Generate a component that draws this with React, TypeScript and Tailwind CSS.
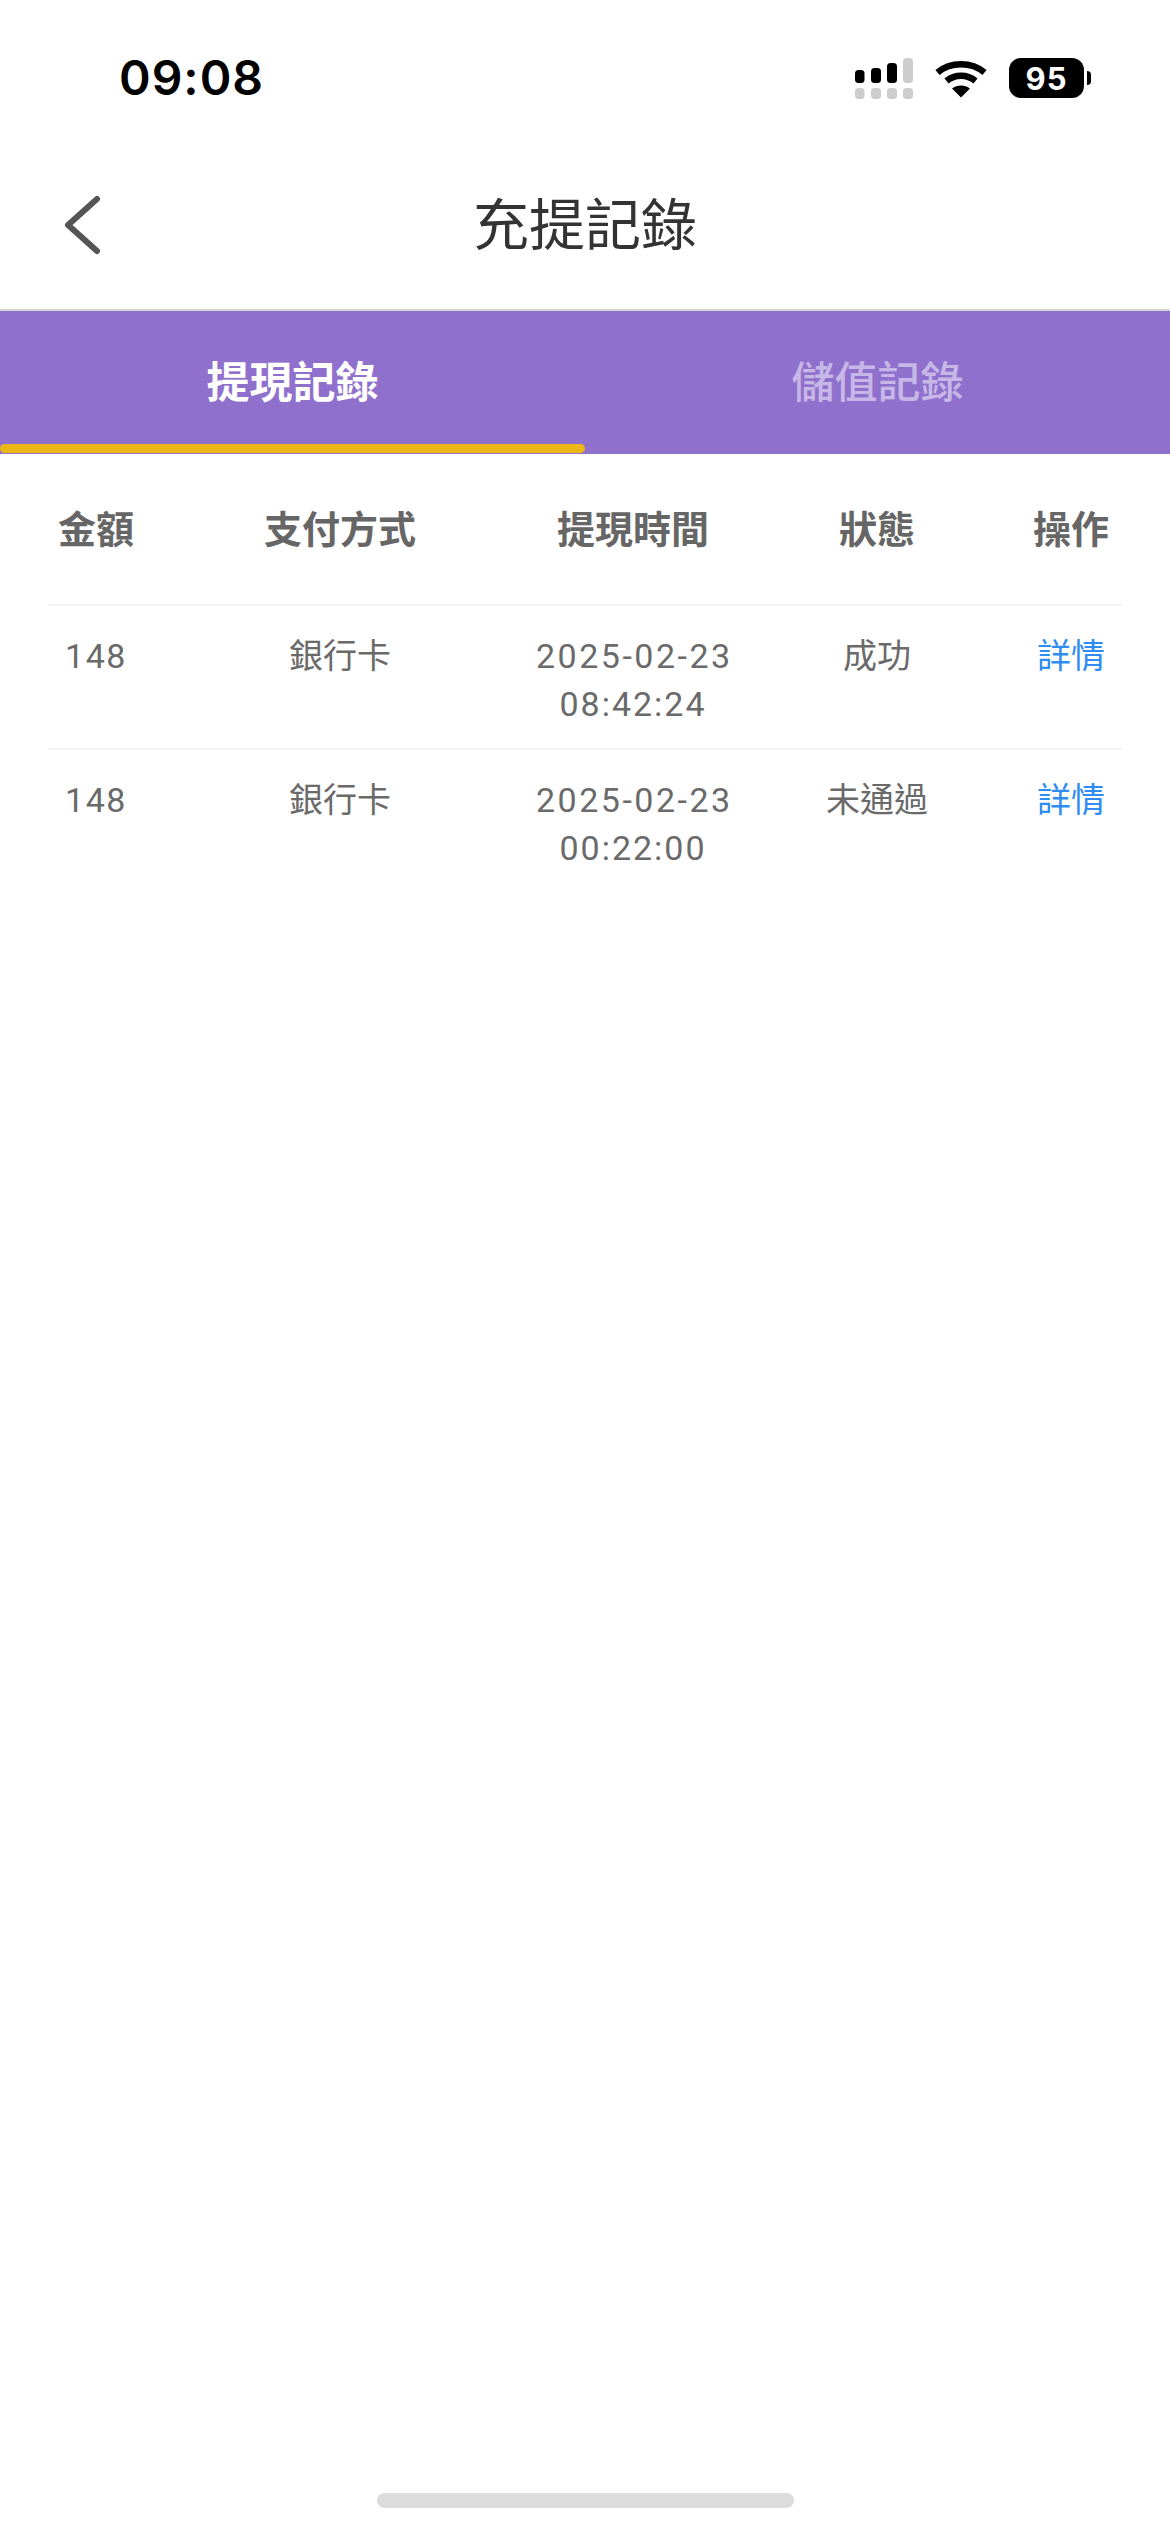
const cjk = "font-['Roboto','Noto_Sans_CJK_TC',sans-serif]";

const rows = [
  { amount: "148", method: "銀行卡", date: "2025-02-23", time: "08:42:24", status: "成功" },
  { amount: "148", method: "銀行卡", date: "2025-02-23", time: "00:22:00", status: "未通過" },
];

function Signal() {
  return (
    <svg width="58" height="41" viewBox="0 0 58 41">
      <rect x="0" y="12" width="9.5" height="13" rx="3.5" fill="#000" />
      <rect x="16" y="10" width="10" height="15" rx="3.5" fill="#000" />
      <rect x="32" y="5" width="10" height="20" rx="3.5" fill="#000" />
      <rect x="48" y="0" width="10" height="25" rx="3.5" fill="#cdcdcd" />
      <rect x="0" y="30" width="9.5" height="11" rx="3.5" fill="#cdcdcd" />
      <rect x="16" y="30" width="10" height="11" rx="3.5" fill="#cdcdcd" />
      <rect x="32" y="30" width="10" height="11" rx="3.5" fill="#cdcdcd" />
      <rect x="48" y="30" width="10" height="11" rx="3.5" fill="#cdcdcd" />
    </svg>
  );
}

function Wifi() {
  return (
    <svg width="52" height="38" viewBox="0 0 52 38">
      <path d="M2.5 12.5C15.5 1.5 36.5 1.5 49.5 12.5" fill="none" stroke="#000" strokeWidth="6.5" strokeLinecap="butt" />
      <path d="M11.5 21C20 14 32 14 40.5 21" fill="none" stroke="#000" strokeWidth="6.5" strokeLinecap="butt" />
      <path d="M26 37.5L17 28.5C22 24.6 30 24.6 35 28.5Z" fill="#000" />
    </svg>
  );
}

function Battery() {
  return (
    <div className="flex items-center">
      <div className="flex h-[40px] w-[75px] items-center justify-center rounded-[12px] bg-black font-['Inter',sans-serif] text-[31px] font-bold leading-none tracking-[1px] text-white">
        95
      </div>
      <div className="ml-[3px] h-[14px] w-[4px] rounded-r-full bg-black" />
    </div>
  );
}

export default function App() {
  return (
    <div className={`flex min-h-[2532px] flex-col bg-white ${cjk}`}>
      <div className="flex h-[100px] items-start justify-between pl-[119px] pr-[79px] pt-[58px]">
        <div className="font-['Inter',sans-serif] text-[48px] font-semibold leading-[40px] tracking-[1px] text-black">09:08</div>
        <div className="flex items-start">
          <Signal />
          <div className="ml-[22px] mt-[2px]"><Wifi /></div>
          <div className="ml-[22px]"><Battery /></div>
        </div>
      </div>

      <div className="grid h-[211px] grid-cols-[1fr_auto_1fr] items-center border-b-2 border-[#d4d4d4] pt-[40px]">
        <div className="pl-[62px]">
          <svg width="40" height="60" viewBox="0 0 40 60" className="block">
            <path d="M35 4L6 30L35 56" fill="none" stroke="#555" strokeWidth="6" strokeLinecap="round" strokeLinejoin="round" />
          </svg>
        </div>
        <div className="pt-[3px] text-[56px] leading-[70px] text-[#333]">充提記錄</div>
        <div />
      </div>

      <div className="grid h-[143px] grid-cols-2 bg-[#8f70cd]">
        <div className="flex flex-col">
          <div className="flex flex-1 items-center justify-center pt-[12px] text-[43px] font-bold text-white">提現記錄</div>
          <div className="mb-[1px] h-[9px] rounded-full bg-[#ecb716]" />
        </div>
        <div className="flex flex-col">
          <div className="flex flex-1 items-center justify-center pt-[12px] text-[43px] font-medium text-white/50">儲值記錄</div>
          <div className="mb-[1px] h-[9px]" />
        </div>
      </div>

      <div className="px-[48px]">
        <div className="grid h-[152px] grid-cols-[96px_392px_194px_294px_94px] items-center border-b-[2px] border-[#f3f3f3] pt-[3px] text-center text-[38px] font-bold text-[#666]">
          <div>金額</div>
          <div>支付方式</div>
          <div>提現時間</div>
          <div>狀態</div>
          <div>操作</div>
        </div>
        {rows.map((r, i) => (
          <div
            key={r.time}
            className={`grid h-[144px] grid-cols-[96px_392px_194px_294px_94px] pt-[26px] text-center text-[34px] leading-[48px] text-[#6a6a6a] ${i === 0 ? "border-b-[2px] border-[#f3f3f3]" : ""}`}
          >
            <div className="tracking-[1.5px]">{r.amount}</div>
            <div>{r.method}</div>
            <div className="whitespace-nowrap tracking-[2.5px]">
              <div>{r.date}</div>
              <div className="tracking-[2px]">{r.time}</div>
            </div>
            <div>{r.status}</div>
            <div className="text-[#2f8cf0]">詳情</div>
          </div>
        ))}
      </div>

      <div className="mt-auto mb-[24px] h-[15px] w-[417px] self-center rounded-full bg-[#dcdcdc]" />
    </div>
  );
}
